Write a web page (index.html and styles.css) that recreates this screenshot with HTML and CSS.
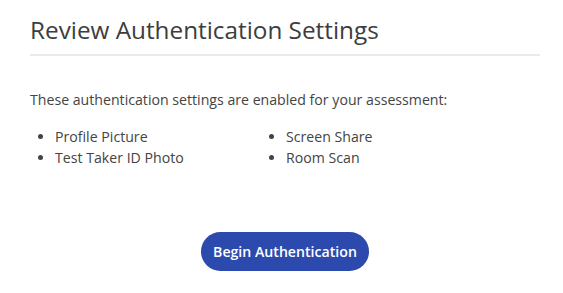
FILE: index.html
```html
<!DOCTYPE html>
<html lang="en">
<head>
    <meta charset="UTF-8">
    <title>Review Authentication Settings</title>
    <link rel="stylesheet" href="styles.css">
</head>
<body>
    <div class="review-panel">
        <h1>Review Authentication Settings</h1>
        <p class="intro">These authentication settings are enabled for your assessment:</p>
        <ul class="settings-list">
            <li>Profile Picture</li>
            <li>Test Taker ID Photo</li>
            <li>Screen Share</li>
            <li>Room Scan</li>
        </ul>
        <div class="actions">
            <button class="begin-btn">Begin Authentication</button>
        </div>
    </div>
</body>
</html>
```

FILE: styles.css
```css
* {
    margin: 0;
    padding: 0;
    box-sizing: border-box;
}

body {
    background-color: #fff;
    color: #444;
    font-family: 'Open Sans', sans-serif;
}

.review-panel {
    width: 540px;
    padding: 13px 0 0 30px;
}

h1 {
    font-size: 24.3px;
    font-weight: 400;
    color: #3d3d3d;
    line-height: 34px;
    padding-bottom: 7px;
    border-bottom: 2px solid #ebebeb;
}

.intro {
    font-size: 14.15px;
    line-height: 20px;
    margin-top: 34px;
    color: #444;
}

.settings-list {
    display: grid;
    grid-template-columns: 231px 1fr;
    grid-auto-flow: column;
    grid-template-rows: 21px 21px;
    margin-top: 16px;
    padding-left: 25px;
    font-size: 14.15px;
    line-height: 21px;
}

.actions {
    display: flex;
    justify-content: center;
    margin-top: 64px;
}

.begin-btn {
    background-color: #2c49ad;
    color: #fff;
    border: none;
    border-radius: 20px;
    padding: 0 12px;
    height: 39px;
    font-family: 'Open Sans', sans-serif;
    font-size: 14.15px;
    font-weight: 600;
    cursor: pointer;
}
```
